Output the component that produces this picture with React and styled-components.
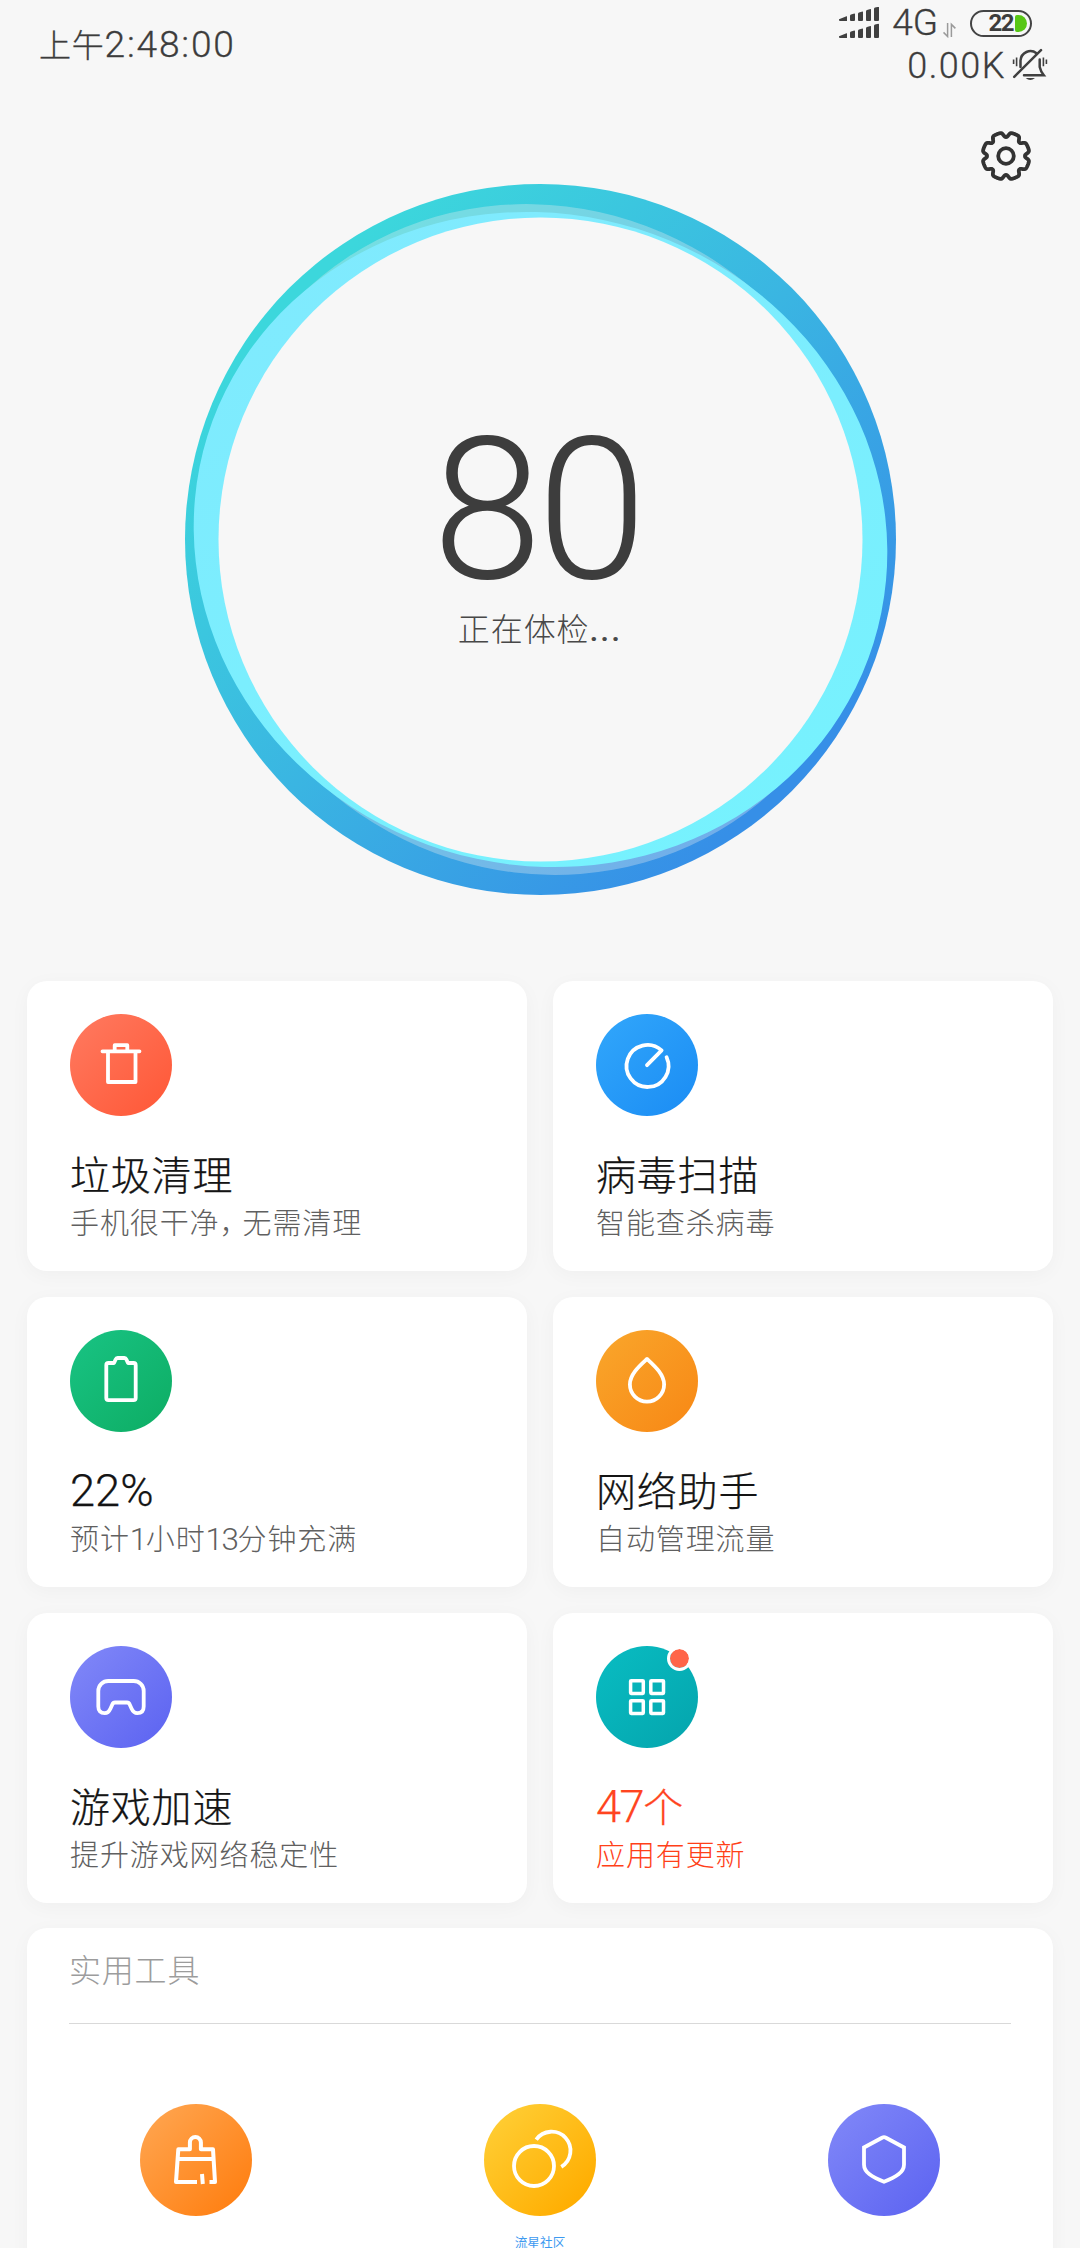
import React from 'react';
import styled, { createGlobalStyle } from 'styled-components';

const GlobalStyle = createGlobalStyle`
  * {
    box-sizing : border-box;
  }

  body {
    margin : 0;
    background : #f7f7f7;
    font-family : Roboto, "Noto Sans CJK SC", sans-serif;
    font-weight : 300;
  }
`;

const Page = styled.div`
  display : flex;
  flex-direction : column;
  width : 1080px;
  height : 2248px;
  overflow : hidden;
  background : #f7f7f7;
`;

const StatusBar = styled.header`
  display : flex;
  justify-content : space-between;
  flex : none;
  height : 90px;
  padding : 4px 32px 0 39px;
  color : #3c3c3c;
  -webkit-text-stroke : 0.3px currentColor;
`;

const Clock = styled.div`
  padding-top : 20px;
  font-size : 32px;
  line-height : 44px;
  letter-spacing : 0.8px;
  white-space : nowrap;
`;

// latin digits are drawn a little larger than the hanzi next to them
const Num = styled.span`
  font-size : ${(props) => props.$scale || 1.13}em;
  line-height : 1;
  letter-spacing : ${(props) => props.$spacing || 0}px;
`;

const StatusRight = styled.div`
  display : flex;
  flex-direction : column;
  align-items : flex-end;
`;

const StatusLine = styled.div`
  display : flex;
  align-items : center;
  height : ${(props) => props.$height || 38}px;
  padding-right : ${(props) => props.$right || 0}px;
`;

const NetworkType = styled.span`
  margin-left : 13px;
  margin-right : 5px;
  font-size : 37px;
  line-height : 38px;
`;

const NetSpeed = styled.span`
  margin-right : 6px;
  padding-top : 1px;
  font-size : 36px;
  line-height : 38px;
  letter-spacing : 1.5px;
`;

const Battery = styled.div`
  display : flex;
  align-items : center;
  justify-content : flex-end;
  width : 62px;
  height : 27px;
  margin-left : 14px;
  padding-right : 3px;
  border : 2.5px solid #444444;
  border-radius : 14px;
`;

const BatteryText = styled.span`
  font-size : 24px;
  font-weight : 700;
  line-height : 22px;
  letter-spacing : -1.5px;
  -webkit-text-stroke : 0;
`;

const BatteryLevel = styled.span`
  width : 12px;
  height : 17px;
  margin-left : 2px;
  border-radius : 2px 9px 9px 2px;
  background : #58c715;
`;

const TopBar = styled.div`
  display : flex;
  justify-content : flex-end;
  flex : none;
  height : 94px;
  padding : 40px 48px 0 0;
`;

const ScoreRing = styled.section`
  position : relative;
  display : flex;
  flex-direction : column;
  align-items : center;
  flex : none;
  width : 711px;
  height : 711px;
  margin : 0 auto 86px;
`;

const RingSvg = styled.svg`
  position : absolute;
  top : 0;
  left : 0;
`;

const Score = styled.div`
  position : relative;
  margin-top : 226px;
  padding-right : 6px;
  font-size : 198px;
  line-height : 200px;
  letter-spacing : -5px;
  color : #3d3d3d;
`;

const ScoreState = styled.div`
  position : relative;
  margin-top : -2px;
  font-size : 32px;
  line-height : 44px;
  letter-spacing : 0.9px;
  color : #484848;
`;

const Dots = styled.span`
  font-weight : 500;
  letter-spacing : 2px;
`;

const CardGrid = styled.main`
  display : grid;
  flex : none;
  grid-template-columns : 500px 500px;
  grid-auto-rows : 290px;
  gap : 26px;
  margin : 0 27px 25px;
`;

const Card = styled.div`
  padding : 33px 43px 0;
  border-radius : 20px;
  background : #ffffff;
  box-shadow : 0 4px 20px rgba(0, 0, 0, 0.035);
`;

const IconCircle = styled.div`
  position : relative;
  width : ${(props) => props.$size}px;
  height : ${(props) => props.$size}px;
  border-radius : 50%;
  background : linear-gradient(135deg, ${(props) => props.$from} 15%, ${(props) => props.$to} 85%);

  svg {
    display : block;
  }
`;

const Badge = styled.span`
  position : absolute;
  top : 0;
  right : 6px;
  width : 25px;
  height : 25px;
  border : 3.2px solid #ffffff;
  border-radius : 50%;
  background : #ff6549;
  background-clip : padding-box;
`;

const CardTitle = styled.div`
  height : 56px;
  margin-top : 32px;
  font-size : 40px;
  line-height : 57px;
  letter-spacing : 0.8px;
  color : ${(props) => (props.$alert ? '#ff4420' : '#141414')};
  -webkit-text-stroke : 0.25px currentColor;
`;

const CardText = styled.div`
  height : 40px;
  font-size : 29px;
  line-height : 40px;
  letter-spacing : 0.9px;
  white-space : nowrap;
  color : ${(props) => (props.$alert ? '#ff4018' : '#606060')};
`;

const Comma = styled.span`
  letter-spacing : -6px;
`;

const ToolPanel = styled.section`
  height : 400px;
  flex : none;
  margin : 0 27px;
  padding : 21px 42px 0;
  border-radius : 20px;
  background : #ffffff;
  box-shadow : 0 4px 20px rgba(0, 0, 0, 0.035);
`;

const ToolHeading = styled.div`
  height : 75px;
  border-bottom : 1px solid #d9d9d9;
  font-size : 32px;
  line-height : 44px;
  letter-spacing : 0.8px;
  color : #9c9c9c;
`;

const ToolGrid = styled.div`
  display : grid;
  grid-template-columns : repeat(3, 112px);
  justify-content : center;
  column-gap : 232px;
  padding-top : 80px;
`;

const Tool = styled.div`
  display : flex;
  flex-direction : column;
  align-items : center;
`;

const ToolLabel = styled.span`
  margin-top : 19px;
  font-size : 12.7px;
  line-height : 16px;
  font-weight : 400;
  color : #3d9af0;
`;

const line = {
  fill: 'none',
  stroke: '#ffffff',
  strokeWidth: 3.8,
  strokeLinecap: 'round',
  strokeLinejoin: 'round',
};

function SignalIcon() {
  return (
    <svg width="40" height="32" viewBox="0 0 40 32" fill="#404040">
      {[0, 17].map((y) => (
        <g key={y} transform={`translate(0 ${y})`}>
          <path d="M0 12.2 7.5 9.2Q8 9 8 9.6V14H1Q0 14 0 13Z" />
          <path d="M11 9Q11 8 12 7.6L15.4 6.6Q16 6.5 16 7V13Q16 14 15 14H12Q11 14 11 13Z" />
          <path d="M19 6.6Q19 5.8 20 5.4L23.4 4.4Q24 4.3 24 5V13Q24 14 23 14H20Q19 14 19 13Z" />
          <path d="M27 4.2Q27 3.3 28 2.9L31.4 1.9Q32 1.8 32 2.5V13Q32 14 31 14H28Q27 14 27 13Z" />
          <path d="M35 2Q35 1 36 .6L39.4 -.2Q40 -.2 40 .5V13Q40 14 39 14H36Q35 14 35 13Z" />
        </g>
      ))}
    </svg>
  );
}

function TransferIcon() {
  return (
    <svg width="13" height="29" viewBox="0 0 13 29" fill="none" stroke="#9a9a9a" strokeWidth="1.5">
      <path d="M4.6 14V27.5L.5 23.4" />
      <path d="M8.4 28V15.4L12.4 19.4" />
    </svg>
  );
}

function MuteBellIcon() {
  return (
    <svg width="36" height="34" viewBox="0 0 36 34" fill="none" stroke="#404040" strokeLinecap="round">
      <path d="M8.5 19V12.5A10 10.3 0 0 1 24.5 5.2" strokeWidth="2.5" />
      <path d="M27.7 11.5V19Q28.5 23 31.8 27.2H12" strokeWidth="2.5" />
      <path d="M2.2 28.8 29 2.2" strokeWidth="2.5" />
      <path d="M13.6 30Q18.3 34.2 23 30Z" fill="#404040" stroke="none" />
      <path d="M1.6 11.5V16M34.4 11.5V16M4.6 9.5V18.3M31.4 9.5V18.3" strokeWidth="1.6" strokeLinecap="butt" />
    </svg>
  );
}

// eight rounded notches cut into a circle
const gearPoints = Array.from({ length: 360 }, (_, deg) => {
  const offset = Math.abs(((deg + 22.5) % 45) - 22.5);
  const r = 23.6 - 4.6 * Math.exp(-Math.pow(offset / 8.2, 3));
  const a = (deg * Math.PI) / 180;
  return `${(26 + r * Math.cos(a)).toFixed(2)},${(26 + r * Math.sin(a)).toFixed(2)}`;
}).join(' ');

function GearIcon() {
  return (
    <svg width="52" height="52" viewBox="0 0 52 52" fill="none" stroke="#333333" strokeWidth="3.8" strokeLinejoin="round">
      <polygon points={gearPoints} />
      <circle cx="26" cy="26" r="7.8" />
    </svg>
  );
}

function Ring() {
  return (
    <RingSvg width="711" height="711" viewBox="0 0 711 711">
      <defs>
        <linearGradient id="ringBase" x1="0.16" y1="0.16" x2="0.84" y2="0.84">
          <stop offset="0" stopColor="#3cd7dc" />
          <stop offset="0.5" stopColor="#3ab5e2" />
          <stop offset="1" stopColor="#368fe7" />
        </linearGradient>
        <linearGradient id="ringGlow" x1="0.1" y1="0.1" x2="0.9" y2="0.9">
          <stop offset="0" stopColor="#80eafe" />
          <stop offset="1" stopColor="#76f2fe" />
        </linearGradient>
      </defs>
      <circle cx="355.5" cy="355.5" r="355.5" fill="url(#ringBase)" />
      <ellipse cx="355.5" cy="355.5" rx="342.4" ry="328.2" transform="rotate(45 355.5 355.5)" fill="#f0f0f0" fillOpacity="0.32" />
      <ellipse cx="355.5" cy="355.5" rx="348.8" ry="325.4" transform="rotate(17.3 355.5 355.5)" fill="url(#ringGlow)" />
      <circle cx="355.5" cy="355.5" r="322" fill="#f7f7f7" />
    </RingSvg>
  );
}

function TrashIcon() {
  return (
    <svg viewBox="0 0 102 102" {...line}>
      <path d="M32.5 37.3H69.5M38 38V68H65.5V38M44.7 37V31.2H57.3V37" />
    </svg>
  );
}

function ScanIcon() {
  return (
    <svg viewBox="0 0 102 102" {...line}>
      <path d="M51 51.2 65.6 36.4A21 21 0 1 0 70.6 43.2" />
    </svg>
  );
}

function BatteryIcon() {
  return (
    <svg viewBox="0 0 102 102" {...line}>
      <path d="M36.3 35.2Q36.3 33 38.5 33H44L45.6 29.4Q46.2 28 47.6 28H54.4Q55.8 28 56.4 29.4L58 33H63.5Q65.7 33 65.7 35.2V68Q65.7 70.2 63.5 70.2H38.5Q36.3 70.2 36.3 68Z" />
    </svg>
  );
}

function DropIcon() {
  return (
    <svg viewBox="0 0 102 102" {...line}>
      <path d="M51 29C58 35.5 68.1 44 68.1 54.5A17.1 17.1 0 0 1 33.9 54.5C33.9 44 44 35.5 51 29Z" />
    </svg>
  );
}

function GamepadIcon() {
  return (
    <svg viewBox="0 0 102 102" {...line}>
      <path d="M38.3 35H63.7A10 10 0 0 1 73.7 45V60.5Q73.7 67.2 67.3 67.2Q63.6 67.2 61.5 62.5L59.7 58.4Q58.9 56.5 57 56.5H45Q43.1 56.5 42.3 58.4L40.5 62.5Q38.4 67.2 34.7 67.2Q28.3 67.2 28.3 60.5V45A10 10 0 0 1 38.3 35Z" />
    </svg>
  );
}

function AppsIcon() {
  return (
    <svg viewBox="0 0 102 102" {...line} strokeWidth="3.5">
      <rect x="34.6" y="34.7" width="12.7" height="12.7" rx="0.6" />
      <rect x="54.8" y="34.7" width="12.7" height="12.7" rx="0.6" />
      <rect x="34.6" y="54.7" width="12.7" height="12.7" rx="0.6" />
      <rect x="54.8" y="54.7" width="12.7" height="12.7" rx="0.6" />
    </svg>
  );
}

function BrushIcon() {
  return (
    <svg viewBox="0 0 112 112" {...line} strokeWidth="4" strokeLinecap="butt">
      <path d="M57 78H36L38.3 45.3H49.9V38.5A5.5 5.5 0 0 1 60.9 38.5V45.3H73L75 78H69.5M38 55H73.5M62 70 62.8 80" />
    </svg>
  );
}

function CoinsIcon() {
  return (
    <svg viewBox="0 0 112 112" {...line} strokeLinecap="butt">
      <circle cx="50" cy="62" r="20" />
      <path d="M52.2 35.6A18.9 18.9 0 1 1 77.3 62.8" />
    </svg>
  );
}

function ShieldIcon() {
  return (
    <svg viewBox="0 0 112 112" {...line} strokeLinecap="butt">
      <path d="M54.5 33.5Q56 32.6 57.5 33.5L76 43.5V60.5C76 68.5 68 73 56 77.8C44 73 36 68.5 36 60.5V43.5Z" strokeLinejoin="miter" />
    </svg>
  );
}

const cards = [
  {
    id: 'clean',
    from: '#ff755a',
    to: '#ff5c3c',
    icon: <TrashIcon />,
    title: '垃圾清理',
    text: <>手机很干净<Comma>，</Comma>无需清理</>,
  },
  {
    id: 'virus',
    from: '#2ea3fa',
    to: '#1e90f5',
    icon: <ScanIcon />,
    title: '病毒扫描',
    text: '智能查杀病毒',
  },
  {
    id: 'battery',
    from: '#17c07f',
    to: '#0fb068',
    icon: <BatteryIcon />,
    title: <Num>22%</Num>,
    text: <>预计<Num $scale={1.08} $spacing={-1.4}>1</Num>小时<Num $scale={1.08} $spacing={-1.4}>13</Num>分钟充满</>,
  },
  {
    id: 'network',
    from: '#f9a228',
    to: '#f88c18',
    icon: <DropIcon />,
    title: '网络助手',
    text: '自动管理流量',
  },
  {
    id: 'game',
    from: '#7c83f7',
    to: '#6168f2',
    icon: <GamepadIcon />,
    title: '游戏加速',
    text: '提升游戏网络稳定性',
  },
  {
    id: 'apps',
    from: '#08b9bf',
    to: '#05a8b0',
    icon: <AppsIcon />,
    title: <><Num $spacing={-1.5}>47</Num>个</>,
    text: '应用有更新',
    alert: true,
  },
];

const tools = [
  { id: 'deep', from: '#ffa149', to: '#ff8216', icon: <BrushIcon /> },
  { id: 'dual', from: '#ffcb30', to: '#ffae02', icon: <CoinsIcon />, label: '流星社区' },
  { id: 'safe', from: '#7c83f7', to: '#6168f2', icon: <ShieldIcon /> },
];

function App() {
  return (
    <Page>
      <GlobalStyle />
      <StatusBar>
        <Clock>上午<Num $scale={1.16} $spacing={1.8}>2:48:00</Num></Clock>
        <StatusRight>
          <StatusLine $right={16}>
            <SignalIcon />
            <NetworkType>4G</NetworkType>
            <TransferIcon />
            <Battery>
              <BatteryText>22</BatteryText>
              <BatteryLevel />
            </Battery>
          </StatusLine>
          <StatusLine $height={46}>
            <NetSpeed>0.00K</NetSpeed>
            <MuteBellIcon />
          </StatusLine>
        </StatusRight>
      </StatusBar>
      <TopBar>
        <GearIcon />
      </TopBar>
      <ScoreRing>
        <Ring />
        <Score>80</Score>
        <ScoreState>正在体检<Dots>...</Dots></ScoreState>
      </ScoreRing>
      <CardGrid>
        {cards.map((card) => (
          <Card key={card.id}>
            <IconCircle $size={102} $from={card.from} $to={card.to}>
              {card.icon}
              {card.alert && <Badge />}
            </IconCircle>
            <CardTitle $alert={card.alert}>{card.title}</CardTitle>
            <CardText $alert={card.alert}>{card.text}</CardText>
          </Card>
        ))}
      </CardGrid>
      <ToolPanel>
        <ToolHeading>实用工具</ToolHeading>
        <ToolGrid>
          {tools.map((tool) => (
            <Tool key={tool.id}>
              <IconCircle $size={112} $from={tool.from} $to={tool.to}>
                {tool.icon}
              </IconCircle>
              {tool.label && <ToolLabel>{tool.label}</ToolLabel>}
            </Tool>
          ))}
        </ToolGrid>
      </ToolPanel>
    </Page>
  );
}

export default App;
